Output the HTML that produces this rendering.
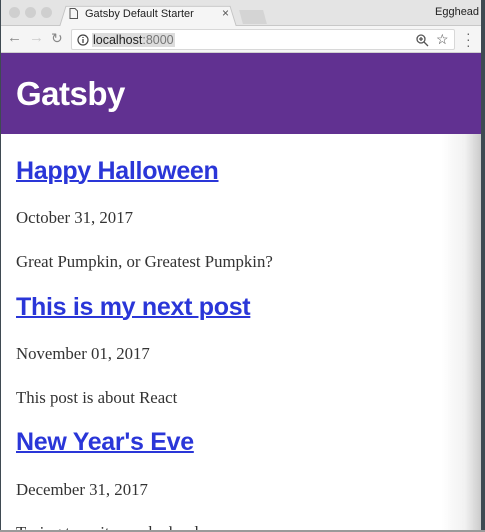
<!DOCTYPE html>
<html><head><style>
*{margin:0;padding:0;box-sizing:border-box}
body{width:485px;height:532px;overflow:hidden;background:#3f4a52;position:relative;font-family:"Liberation Sans",sans-serif}
#win{position:absolute;left:1px;top:0;width:480px;height:530px;background:#fff;overflow:hidden}
#tabs{position:absolute;left:0;top:0;width:480px;height:26px;background:#e4e4e4;border-bottom:1px solid #c8c8c8}
.dot{position:absolute;top:7px;width:11px;height:11px;border-radius:50%;background:#cfcfcf}
#tab{position:absolute;left:58px;top:4px;width:178px;height:23px;background:#f5f5f5;border:1px solid #c4c4c4;border-bottom:none;transform:perspective(40px) rotateX(8deg);transform-origin:bottom}
#tabt{position:absolute;left:84px;top:8px;font-size:11px;color:#222}
#bar{position:absolute;left:0;top:26px;width:480px;height:27px;background:#f5f5f5;border-bottom:1px solid #d0d0d0}
#url{position:absolute;left:70px;top:3px;width:384px;height:21px;background:#fff;border:1px solid #d8d8d8;border-radius:2px}
#hdr{position:absolute;left:0;top:53px;width:480px;height:81px;background:#613191}
#hdr h1{position:absolute;left:15px;top:22px;color:#fff;font-size:33px;font-weight:bold;letter-spacing:-0.5px}
.h{position:absolute;left:15px;color:#2a36d8;font-weight:bold;font-size:25px;text-decoration:underline;text-decoration-thickness:2px;letter-spacing:-0.3px}
.p{position:absolute;left:15px;color:#333;font-family:"Liberation Serif",serif;font-size:16.8px}
#sh{position:absolute;right:0;top:134px;width:40px;height:400px;background:linear-gradient(90deg,rgba(255,255,255,0),rgba(238,238,238,.8) 60%,rgba(200,200,200,.95))}
</style></head><body>
<div id="win">
<div id="tabs">
<div class="dot" style="left:8px"></div><div class="dot" style="left:24px"></div><div class="dot" style="left:40px"></div>
<div id="tab"></div>
<svg style="position:absolute;left:68px;top:8px" width="9" height="11"><path d="M1 .5h5l2.5 2.5v7.5h-7.5z" fill="none" stroke="#555"/></svg>
<div id="tabt">Gatsby Default Starter</div>
<div style="position:absolute;left:221px;top:6px;font-size:12px;color:#555">×</div>
<div style="position:absolute;left:240px;top:10px;width:24px;height:14px;background:#d4d4d4;transform:skewX(15deg)"></div>
<div style="position:absolute;left:434px;top:6px;font-size:11px;color:#222">Egghead</div>
</div>
<div id="bar">
<div style="position:absolute;left:6px;top:3px;font-size:15px;color:#888">←</div>
<div style="position:absolute;left:28px;top:3px;font-size:15px;color:#ccc">→</div>
<div style="position:absolute;left:50px;top:4px;font-size:14px;color:#888">↻</div>
<div id="url">
<svg style="position:absolute;left:5px;top:4px" width="12" height="12"><circle cx="6" cy="6" r="5" fill="none" stroke="#444" stroke-width="1.2"/><path d="M6 5v4M6 3v1" stroke="#444" stroke-width="1.3"/></svg>
<div style="position:absolute;left:20px;top:3px;font-size:12.5px;color:#222;background:#ddd;padding:0 1px">localhost<span style="color:#777">:8000</span></div>
<svg style="position:absolute;left:343px;top:3px" width="14" height="14"><circle cx="6" cy="6" r="4" fill="none" stroke="#555" stroke-width="1.3"/><path d="M9 9l4 4M4 6h4M6 4v4" stroke="#555" stroke-width="1.3"/></svg>
<div style="position:absolute;left:364px;top:1px;font-size:14px;color:#444">☆</div>
</div>
<div style="position:absolute;left:465px;top:4px;font-size:14px;color:#666;line-height:6px">·<br>·<br>·</div>
</div>
<div id="hdr"><h1>Gatsby</h1></div>
<div class="h" style="top:157px">Happy Halloween</div>
<div class="p" style="top:208px">October 31, 2017</div>
<div class="p" style="top:252px">Great Pumpkin, or Greatest Pumpkin?</div>
<div class="h" style="top:293px">This is my next post</div>
<div class="p" style="top:344px">November 01, 2017</div>
<div class="p" style="top:388px">This post is about React</div>
<div class="h" style="top:428px">New Year's Eve</div>
<div class="p" style="top:480px">December 31, 2017</div>
<div class="p" style="top:523px">Trying to write can be hard</div>
<div id="sh"></div>
</div>
<div style="position:absolute;left:0;top:530px;width:485px;height:2px;background:#9a9a9a"></div>
</body></html>
